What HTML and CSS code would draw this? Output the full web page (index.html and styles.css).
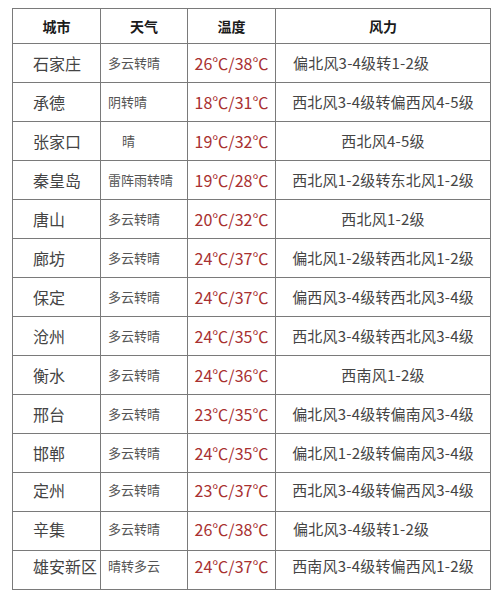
FILE: index.html
```html
<!DOCTYPE html>
<html lang="zh">
<head>
<meta charset="utf-8">
<link rel="stylesheet" href="styles.css">
</head>
<body>
<table class="weather">
  <colgroup>
    <col class="c-city"><col class="c-wx"><col class="c-temp"><col class="c-wind">
  </colgroup>
  <thead>
    <tr><th>城市</th><th>天气</th><th>温度</th><th>风力</th></tr>
  </thead>
  <tbody>
    <tr><td class="city">石家庄</td><td class="wx">多云转晴</td><td class="temp">26℃/38℃</td><td class="wind left">偏北风3-4级转1-2级</td></tr>
    <tr><td class="city">承德</td><td class="wx">阴转晴</td><td class="temp">18℃/31℃</td><td class="wind">西北风3-4级转偏西风4-5级</td></tr>
    <tr><td class="city">张家口</td><td class="wx indent">晴</td><td class="temp">19℃/32℃</td><td class="wind">西北风4-5级</td></tr>
    <tr><td class="city">秦皇岛</td><td class="wx">雷阵雨转晴</td><td class="temp">19℃/28℃</td><td class="wind">西北风1-2级转东北风1-2级</td></tr>
    <tr><td class="city">唐山</td><td class="wx">多云转晴</td><td class="temp">20℃/32℃</td><td class="wind">西北风1-2级</td></tr>
    <tr><td class="city">廊坊</td><td class="wx">多云转晴</td><td class="temp">24℃/37℃</td><td class="wind">偏北风1-2级转西北风1-2级</td></tr>
    <tr><td class="city">保定</td><td class="wx">多云转晴</td><td class="temp">24℃/37℃</td><td class="wind">偏西风3-4级转西北风3-4级</td></tr>
    <tr><td class="city">沧州</td><td class="wx">多云转晴</td><td class="temp">24℃/35℃</td><td class="wind">西北风3-4级转西北风3-4级</td></tr>
    <tr><td class="city">衡水</td><td class="wx">多云转晴</td><td class="temp">24℃/36℃</td><td class="wind">西南风1-2级</td></tr>
    <tr><td class="city">邢台</td><td class="wx">多云转晴</td><td class="temp">23℃/35℃</td><td class="wind">偏北风3-4级转偏南风3-4级</td></tr>
    <tr><td class="city">邯郸</td><td class="wx">多云转晴</td><td class="temp">24℃/35℃</td><td class="wind">偏北风1-2级转偏南风3-4级</td></tr>
    <tr class="up"><td class="city">定州</td><td class="wx">多云转晴</td><td class="temp">23℃/37℃</td><td class="wind">西北风3-4级转偏西风3-4级</td></tr>
    <tr class="up"><td class="city">辛集</td><td class="wx">多云转晴</td><td class="temp">26℃/38℃</td><td class="wind left">偏北风3-4级转1-2级</td></tr>
    <tr class="up2"><td class="city">雄安新区</td><td class="wx">晴转多云</td><td class="temp">24℃/37℃</td><td class="wind">西南风3-4级转偏西风1-2级</td></tr>
  </tbody>
</table>
</body>
</html>
```

FILE: styles.css
```css
html, body {
  margin: 0;
  padding: 0;
  background: #ffffff;
}
body {
  width: 500px;
  height: 608px;
  overflow: hidden;
  font-family: "Noto Sans CJK SC", "Noto Sans", sans-serif;
}
.weather {
  margin: 8px 0 0 12px;
  border-collapse: collapse;
  table-layout: fixed;
  width: 478px;
}
.c-city { width: 88px; }
.c-wx { width: 87px; }
.c-temp { width: 88px; }
.c-wind { width: 215px; }

.weather th,
.weather td {
  border: 1px solid #7a7a7a;
  padding: 0;
  white-space: nowrap;
  overflow: hidden;
}
.weather th {
  height: 34px;
  font-size: 14px;
  font-weight: 700;
  color: #1a1a1a;
  text-align: center;
  vertical-align: middle;
}
.weather td {
  height: 38px;
  vertical-align: middle;
  line-height: 20px;
}
.weather tr.up td { padding-bottom: 5px; height: 33px; }
.weather tr.up2 td { padding-bottom: 8px; height: 30px; }

.city {
  font-size: 16px;
  color: #444;
  padding-left: 20px !important;
  text-align: left;
}
.wx {
  font-size: 13px;
  color: #555;
  padding-left: 7px !important;
  text-align: left;
}
.wx.indent { padding-left: 21px !important; }
.temp {
  font-size: 16px;
  color: #a83030;
  text-align: center;
}
.wind {
  font-size: 15px;
  letter-spacing: 0.2px;
  color: #444;
  text-align: center;
}
.wind.left {
  text-align: left;
  padding-left: 17px !important;
}
```
